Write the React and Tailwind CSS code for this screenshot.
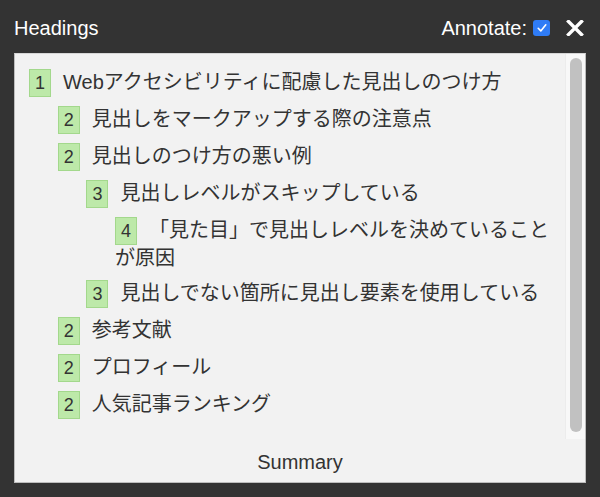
import React from "react";

const items = [
  { level: 1, text: "Webアクセシビリティに配慮した見出しのつけ方" },
  { level: 2, text: "見出しをマークアップする際の注意点" },
  { level: 2, text: "見出しのつけ方の悪い例" },
  { level: 3, text: "見出しレベルがスキップしている" },
  { level: 4, text: "「見た目」で見出しレベルを決めていることが原因" },
  { level: 3, text: "見出しでない箇所に見出し要素を使用している" },
  { level: 2, text: "参考文献" },
  { level: 2, text: "プロフィール" },
  { level: 2, text: "人気記事ランキング" },
];

const indent = {
  1: "pl-0",
  2: "pl-[28.7px]",
  3: "pl-[57.4px]",
  4: "pl-[86.1px]",
};

export default function App() {
  return (
    <div className="w-[600px] h-[497px] bg-[#333333] flex flex-col font-['Liberation_Sans','Noto_Sans_CJK_JP',sans-serif] text-[20px]">
      <div className="h-[53px] flex items-center justify-between pl-[14px] pr-[16px] text-white">
        <span className="leading-[24px] pt-[2px]">Headings</span>
        <div className="flex items-center pt-[2px]">
          <span className="leading-[24px]">Annotate:</span>
          <span className="ml-[6px] w-[17px] h-[16px] rounded-[3px] bg-[#2f7cf6] flex items-center justify-center">
            <svg width="12" height="12" viewBox="0 0 12 12" fill="none">
              <path d="M2.2 6.3 L4.8 8.9 L9.8 2.8" stroke="white" strokeWidth="1.6" strokeLinecap="round" strokeLinejoin="round" />
            </svg>
          </span>
          <span className="ml-[16px] flex items-center">
            <svg width="18" height="16" viewBox="0 0 18 16" fill="none">
              <path d="M2.5 1.5 L15.5 14.5 M15.5 1.5 L2.5 14.5" stroke="white" strokeWidth="3.4" strokeLinecap="square" />
            </svg>
          </span>
        </div>
      </div>
      <div className="mx-[14px] h-[430px] bg-[#f2f2f2] border border-[#bdbdbd] border-t-[#d6d6d6] flex flex-col">
        <div className="h-[385px] flex">
          <div className="flex-1 pl-[14px] pr-[8px] pt-[15px] text-[#333333]">
            {items.map((it, i) => (
              <div key={i} className={`${indent[it.level]} leading-[26px] mb-[9px]`}>
                <span className="inline-block align-baseline border border-[#a3d88c] bg-[#bde9a9] px-[5px] leading-[26px] text-[18px] mr-[12px] text-[#333333]">
                  {it.level}
                </span>
                {it.text}
              </div>
            ))}
          </div>
          <div className="w-[20px] bg-[#f8f8f8] border-l border-[#ececec] flex justify-center pt-[4px] pb-[7px]">
            <div className="w-[12px] rounded-full bg-[#c1c1c1]" />
          </div>
        </div>
        <div className="flex-1 flex items-center justify-center text-[#333333] leading-[24px] pt-[2px]">
          Summary
        </div>
      </div>
    </div>
  );
}
